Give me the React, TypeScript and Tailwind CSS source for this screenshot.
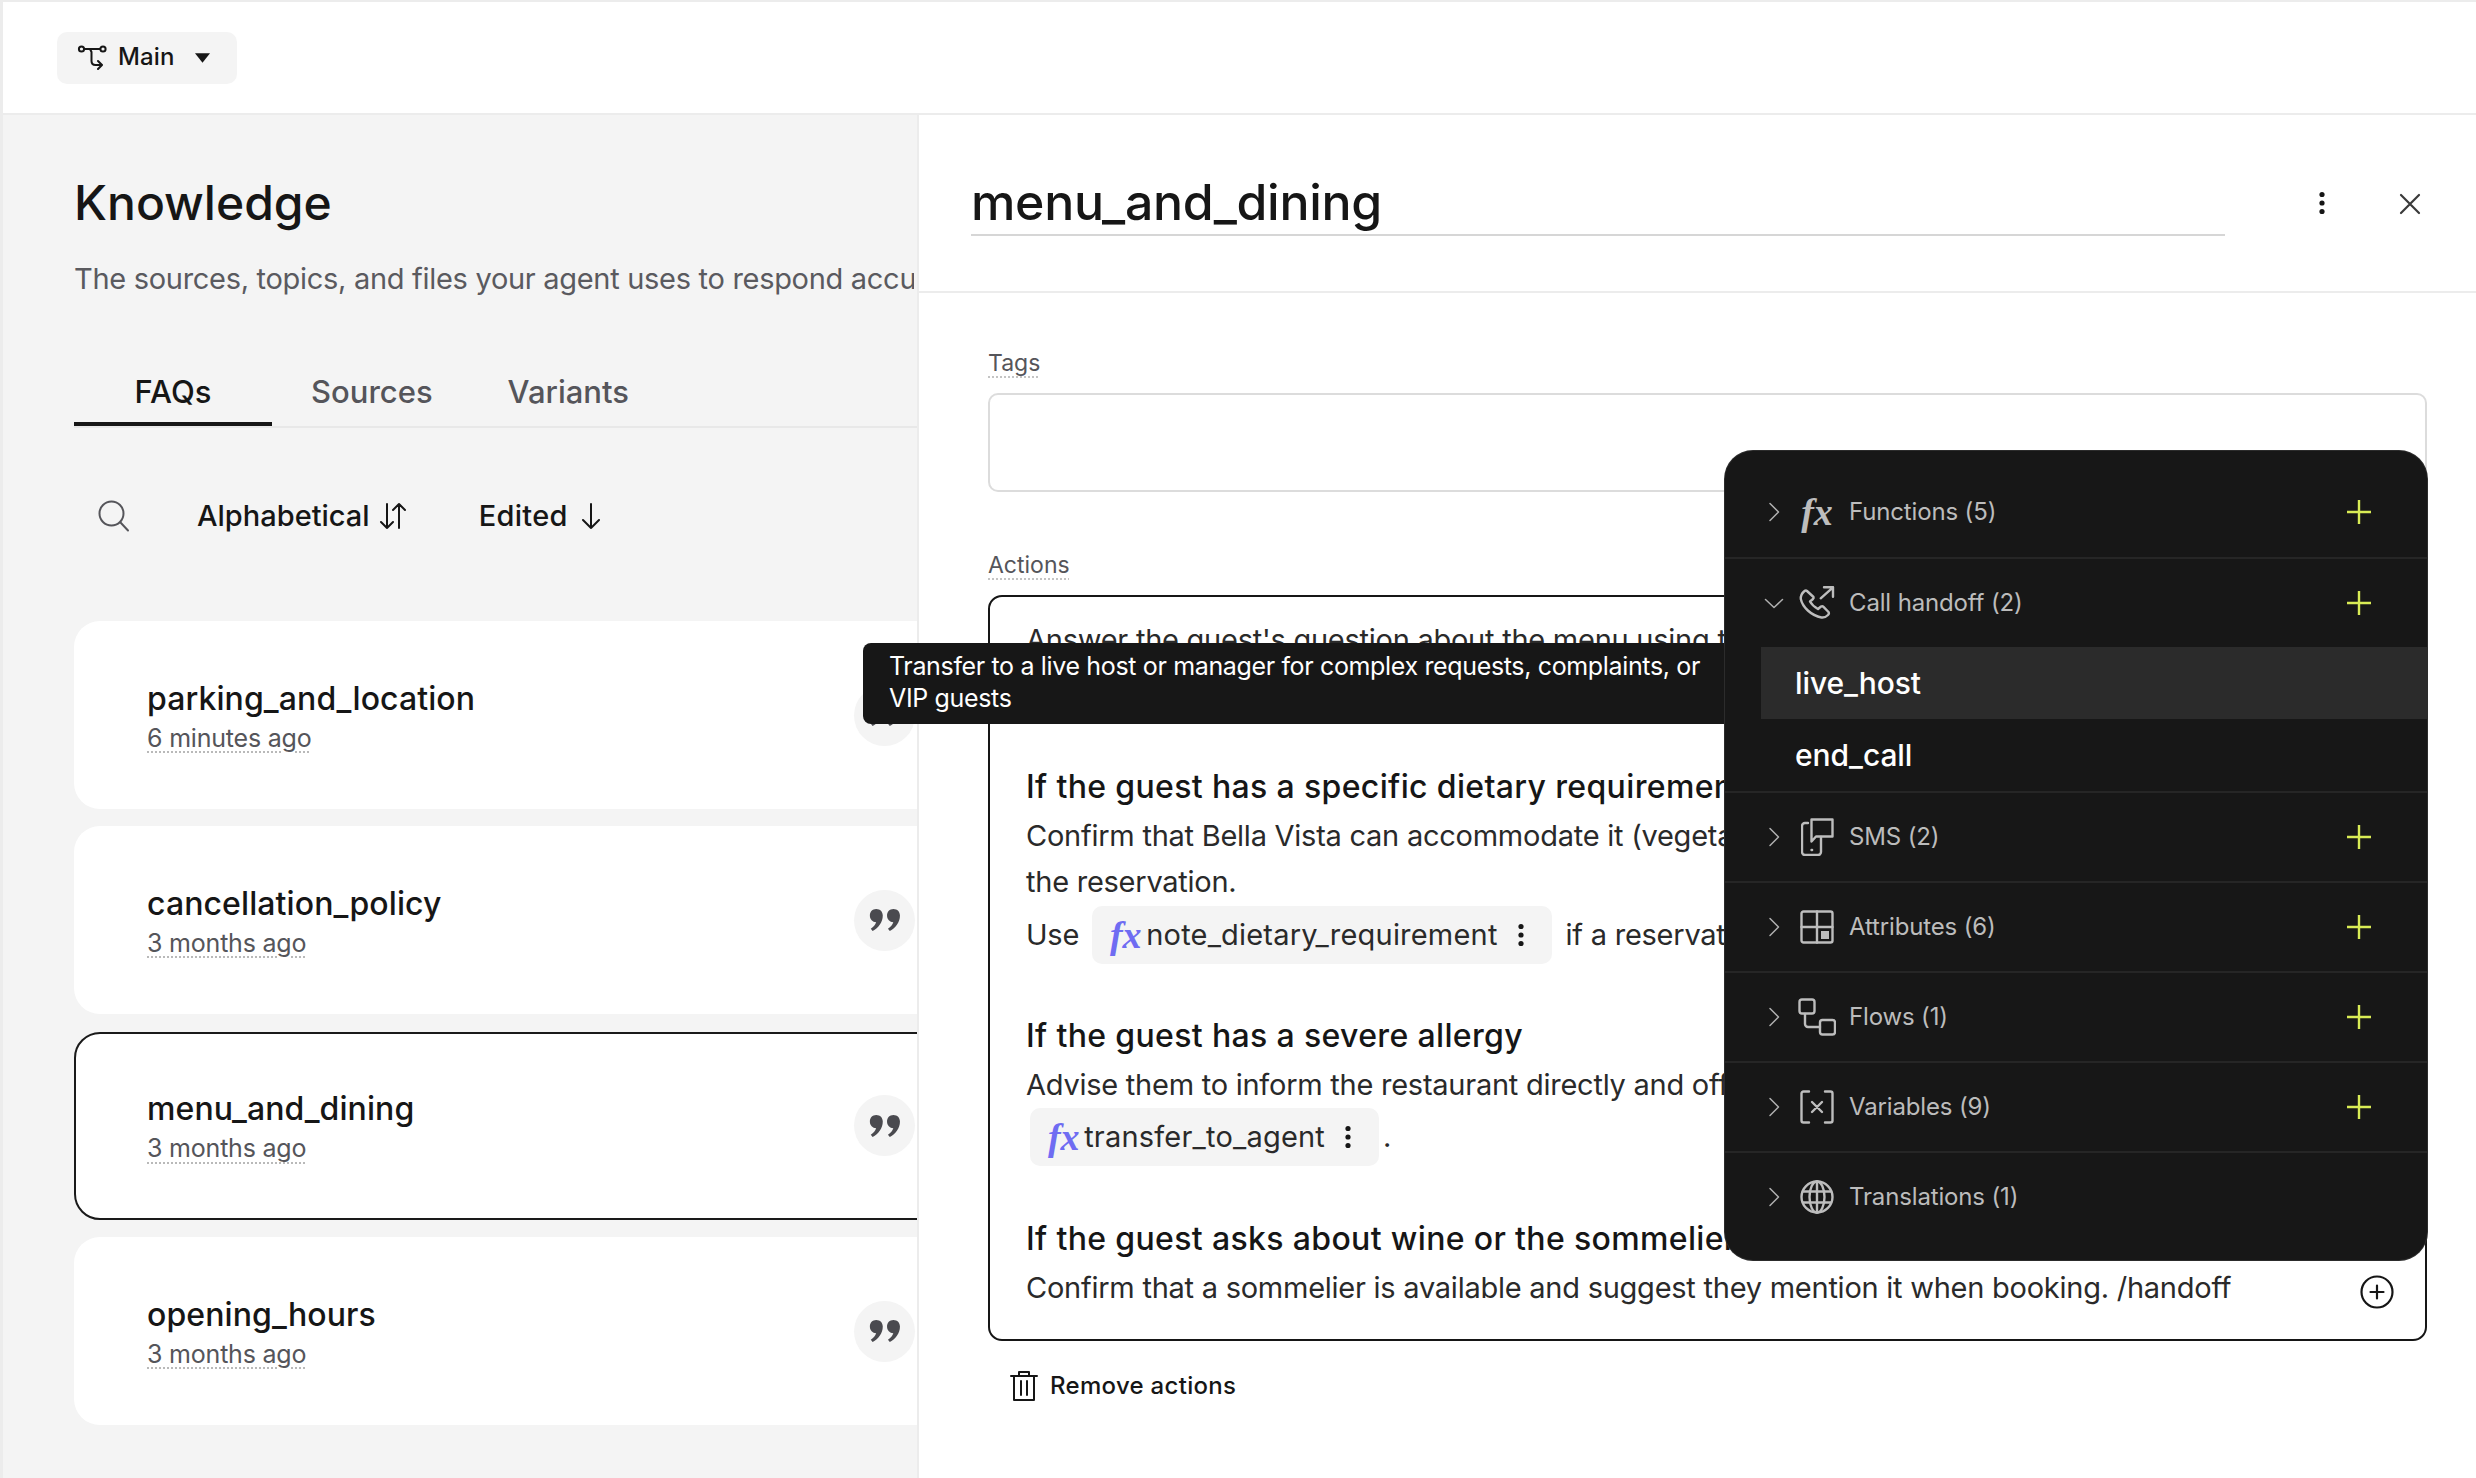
import React from "react";

const Kebab = ({ className = "" }: { className?: string }) => (
  <svg className={className} width="6" height="24" viewBox="0 0 6 24" fill="currentColor">
    <circle cx="3" cy="3.5" r="2.6" />
    <circle cx="3" cy="12" r="2.6" />
    <circle cx="3" cy="20.5" r="2.6" />
  </svg>
);

const Quote = () => (
  <svg width="32" height="24" viewBox="0 0 34 26" fill="#4a4a4f">
    <path d="M7.5 1C11.8 1 14.6 4 14.6 8.2 14.6 15.2 10 21.5 3.6 25L1.6 22.6C4.6 20.4 6.6 18 7.4 15.4 3.6 15.4 0.6 12.4 0.6 8.2 0.6 4 3.4 1 7.5 1Z" />
    <path d="M26.1 1C30.4 1 33.2 4 33.2 8.2 33.2 15.2 28.6 21.5 22.2 25L20.2 22.6C23.2 20.4 25.2 18 26 15.4 22.2 15.4 19.2 12.4 19.2 8.2 19.2 4 22 1 26.1 1Z" />
  </svg>
);

const Card = ({ title, time, selected }: { title: string; time: string; selected?: boolean }) => (
  <div
    className={
      selected
        ? "flex h-[188px] w-[900px] shrink-0 items-center justify-between rounded-[26px] border-2 border-[#1a1a1a] bg-white pl-[71px] pr-[57px]"
        : "flex h-[188px] w-[900px] shrink-0 items-center justify-between rounded-[26px] bg-white pl-[73px] pr-[59px]"
    }
  >
    <div className="flex flex-col pt-[2px]">
      <div className="text-[32px] font-medium leading-[40px] tracking-[0.1px] text-[#161616]">{title}</div>
      <div className="mt-[3px] self-start text-[25px] leading-[32px] tracking-[-0.2px] text-[#55555a] underline decoration-[#b9b9b9] decoration-dotted decoration-2 underline-offset-[5px]">
        {time}
      </div>
    </div>
    <div className="flex h-[61px] w-[61px] items-center justify-center rounded-full bg-[#f4f4f4]">
      <Quote />
    </div>
  </div>
);

const Chevron = ({ open }: { open?: boolean }) => (
  <svg width="22" height="22" viewBox="0 0 22 22" fill="none" stroke="#b0b0b0" strokeWidth="1.5" strokeLinecap="round" strokeLinejoin="round">
    {open ? <path d="M2.5 7.5l8.5 8 8.5-8" /> : <path d="M7 2.5l8.5 8.5L7 19.5" />}
  </svg>
);

const Plus = () => (
  <svg width="26" height="26" viewBox="0 0 26 26" fill="none" stroke="#d9ec55" strokeWidth="2.4">
    <path d="M13 1v24M1 13h24" />
  </svg>
);

const ic = { fill: "none", stroke: "#bdbdbd", strokeWidth: 2.4, strokeLinecap: "round", strokeLinejoin: "round" } as const;

const FxIcon = () => (
  <span className="font-['Liberation_Serif',serif] text-[38px] italic font-bold leading-none text-[#bdbdbd]">fx</span>
);
const CallIcon = () => (
  <svg width="36" height="36" viewBox="0 0 36 36" {...ic}>
    <path d="M8 6L14.5 12Q15 13 14 14L11 16.5Q13.5 21 19 24L22 21.5Q23.5 20.8 24.5 21.8L29.5 27Q30.5 28.5 29 30Q26 33 22.5 32.5C12 30.5 3.5 22 1.8 14Q1.5 9.5 5 6.5Q6.8 5 8 6Z" />
    <path d="M21.7 13.3L34 2.3M25 2.3h9v9.4" />
  </svg>
);
const SmsIcon = () => (
  <svg width="33" height="38" viewBox="0 0 33 38" {...ic}>
    <path d="M7 5H4a3 3 0 0 0-3 3v26a3 3 0 0 0 3 3h13a3 3 0 0 0 3-3V19" />
    <path d="M10.5 1.5h21v17H15l-4.5 5V1.5z" />
    <path d="M10.5 32h.6" />
  </svg>
);
const AttrIcon = () => (
  <svg width="34" height="34" viewBox="0 0 34 34" {...ic}>
    <rect x="1.5" y="1.5" width="31" height="31" rx="2" />
    <path d="M17 1.5v31M1.5 17h31" />
    <rect x="21" y="21" width="8" height="8" fill="#bdbdbd" stroke="none" />
  </svg>
);
const FlowIcon = () => (
  <svg width="38" height="38" viewBox="0 0 38 38" {...ic}>
    <rect x="1.5" y="1.5" width="15" height="14" rx="2.5" />
    <rect x="22" y="22" width="15" height="14.5" rx="2.5" />
    <path d="M7 16v10a3 3 0 0 0 3 3h12" />
  </svg>
);
const VarIcon = () => (
  <svg width="34" height="34" viewBox="0 0 34 34" {...ic}>
    <path d="M9 1.5H3.5a2 2 0 0 0-2 2v27a2 2 0 0 0 2 2H9M25 1.5h5.5a2 2 0 0 1 2 2v27a2 2 0 0 1-2 2H25M12 12l10 10M22 12L12 22" />
  </svg>
);
const GlobeIcon = () => (
  <svg width="34" height="34" viewBox="0 0 34 34" {...ic}>
    <circle cx="17" cy="17" r="15.5" />
    <ellipse cx="17" cy="17" rx="7.5" ry="15.5" />
    <path d="M17 1.5v31M3 11.5h28M3 22.5h28" />
  </svg>
);

const Row = ({ label, icon, plus = true, open }: { label: string; icon: React.ReactNode; plus?: boolean; open?: boolean }) => (
  <div className="flex h-[88px] items-center pl-[38px] pr-[55px]">
    <div className="flex w-[22px] justify-center"><Chevron open={open} /></div>
    <div className="ml-[11px] flex w-[42px] justify-center">{icon}</div>
    <div className="ml-[11px] flex-1 text-[24px] tracking-[-0.15px] text-[#bcbcbc]">{label}</div>
    {plus && <Plus />}
  </div>
);

const Chip = ({ name, className = "" }: { name: string; className?: string }) => (
  <span className={"inline-flex h-[58px] items-center rounded-[10px] bg-[#f4f4f4] pl-[18px] pr-[28px] " + className}>
    <span className="font-['Liberation_Serif',serif] text-[38px] font-bold italic leading-none text-[#6f6cf2]">fx</span>
    <span className="ml-[5px] tracking-[0.2px] text-[#2a2a2a]">{name}</span>
    <Kebab className="ml-[20px] text-[#161616]" />
  </span>
);

export default function App() {
  return (
    <div className="relative flex h-[1478px] w-[2476px] flex-col overflow-hidden border-l-[3px] border-t-2 border-[#ececec] bg-white font-['Inter','Liberation_Sans',sans-serif] text-[#161616]">
      {/* Top bar */}
      <div className="flex h-[113px] shrink-0 items-center border-b-2 border-[#ececec] pl-[54px]">
        <button className="flex h-[52px] w-[180px] items-center rounded-[10px] bg-[#f4f4f4] pl-[20px] pb-[2px]">
          <svg width="30" height="26" viewBox="0 0 30 26" fill="none" stroke="#161616" strokeWidth="2" strokeLinecap="round" strokeLinejoin="round">
            <circle cx="4.5" cy="5" r="2.6" />
            <circle cx="26" cy="5" r="2.6" />
            <path d="M7.5 5h15.5M13 5l1.5 3v9c0 2.5 1.5 4 4 4h6M21 17l4 4-4 4" />
          </svg>
          <span className="ml-[11px] text-[24px] font-[550] tracking-[0.15px]">Main</span>
          <svg className="ml-[20px] mt-[2px]" width="15" height="10" viewBox="0 0 16 10" fill="#161616"><path d="M0 0h16L8 10z" /></svg>
        </button>
      </div>

      <div className="flex min-h-0 flex-1">
        {/* Left panel */}
        <div className="flex w-[914px] shrink-0 flex-col overflow-hidden bg-[#f4f4f4] pl-[71px]">
          <h1 className="mt-[58px] text-[48px] font-medium leading-[60px] text-[#161616]">Knowledge</h1>
          <p className="mt-[26px] w-[840px] overflow-hidden whitespace-nowrap text-[29px] leading-[40px] tracking-[-0.3px] text-[#5a5a5f]">
            The sources, topics, and files your agent uses to respond accurately to callers
          </p>
          <div className="mt-[69px] flex h-[60px] shrink-0 border-b-2 border-[#e8e8e8]">
            <div className="flex h-[58px] w-[198px] justify-center border-b-4 border-[#161616] text-[31px] font-medium leading-[48px]">FAQs</div>
            <div className="ml-[39px] h-[58px] text-[31px] font-medium leading-[48px] text-[#55555a]">Sources</div>
            <div className="ml-[75px] h-[58px] text-[31px] font-medium leading-[48px] text-[#55555a]">Variants</div>
          </div>
          <div className="mt-[60px] flex h-[56px] shrink-0 items-center">
            <svg className="ml-[24px]" width="32" height="32" viewBox="0 0 32 32" fill="none" stroke="#55555a" strokeWidth="2" strokeLinecap="round">
              <circle cx="13.5" cy="13.5" r="12" />
              <path d="M22.5 22.5L30 30.5" />
            </svg>
            <span className="ml-[67px] text-[29px] font-[550]">Alphabetical</span>
            <svg className="ml-[8px]" width="30" height="30" viewBox="0 0 30 30" fill="none" stroke="#161616" strokeWidth="2" strokeLinecap="round" strokeLinejoin="round">
              <path d="M9 3v24M3 21l6 6 6-6M21 27V3M15 9l6-6 6 6" />
            </svg>
            <span className="ml-[71px] text-[29px] font-[550] tracking-[0.3px]">Edited</span>
            <svg className="ml-[12px]" width="22" height="30" viewBox="0 0 22 30" fill="none" stroke="#161616" strokeWidth="2" strokeLinecap="round" strokeLinejoin="round">
              <path d="M11 3v24M3 19l8 8 8-8" />
            </svg>
          </div>
          <div className="mt-[77px] flex flex-col gap-[17.4px]">
            <Card title="parking_and_location" time="6 minutes ago" />
            <Card title="cancellation_policy" time="3 months ago" />
            <Card title="menu_and_dining" time="3 months ago" selected />
            <Card title="opening_hours" time="3 months ago" />
          </div>
        </div>

        {/* Right panel */}
        <div className="flex min-w-0 flex-1 flex-col border-l-2 border-[#ececec]">
          <div className="flex h-[178px] shrink-0 border-b-2 border-[#ececec] pl-[52px]">
            <div className="mt-[55px] h-[66px] w-[1254px] border-b-2 border-[#d6d6d6] text-[50px] font-medium leading-[64px] tracking-[-0.3px]">menu_and_dining</div>
            <Kebab className="ml-[94px] mt-[76px] text-[#161616]" />
            <svg className="ml-[74px] mt-[78px]" width="22" height="22" viewBox="0 0 22 22" fill="none" stroke="#3a3a3a" strokeWidth="2.2" strokeLinecap="round">
              <path d="M2 2l18 18M20 2L2 20" />
            </svg>
          </div>

          <div className="flex flex-col pl-[69px] pr-[49px]">
            <div className="mt-[55px] self-start text-[23px] leading-[30px] text-[#55555a] underline decoration-[#c4c4c4] decoration-dotted decoration-2 underline-offset-[5px]">Tags</div>
            <div className="mt-[15px] h-[99px] rounded-[10px] border-2 border-[#dcdcdc]" />
            <div className="mt-[58px] self-start text-[23px] leading-[30px] text-[#55555a] underline decoration-[#c4c4c4] decoration-dotted decoration-2 underline-offset-[5px]">Actions</div>
            <div className="mt-[15px] h-[746px] overflow-hidden rounded-[14px] border-2 border-[#161616] pl-[36px] pt-[20px] text-[29px] leading-[46px] tracking-[-0.25px] text-[#2a2a2a]">
              <p className="whitespace-nowrap">Answer the guest's question about the menu using the knowledge base below.</p>
              <p className="whitespace-nowrap">Keep it short and mention seasonal dishes where they are relevant.</p>
              <h3 className="mt-[55px] whitespace-nowrap text-[32px] font-[550] tracking-[0.35px] text-[#161616]">If the guest has a specific dietary requirement</h3>
              <p className="mt-[3px] whitespace-nowrap">Confirm that Bella Vista can accommodate it (vegetarian, vegan, gluten-free) and note it on</p>
              <p>the reservation.</p>
              <div className="flex h-[59px] items-center whitespace-nowrap">
                <span>Use</span>
                <Chip name="note_dietary_requirement" className="ml-[13px]" />
                <span className="ml-[14px]">if a reservation exists.</span>
              </div>
              <h3 className="mt-[49px] text-[32px] font-[550] tracking-[0.35px] text-[#161616]">If the guest has a severe allergy</h3>
              <p className="mt-[3px] whitespace-nowrap">Advise them to inform the restaurant directly and offer to connect them:</p>
              <div className="ml-[4px] flex h-[58px] items-center">
                <Chip name="transfer_to_agent" />
                <span className="ml-[4px]">.</span>
              </div>
              <h3 className="mt-[50px] whitespace-nowrap text-[32px] font-[550] tracking-[0.35px] text-[#161616]">If the guest asks about wine or the sommelier</h3>
              <div className="mt-[3px] flex justify-between pr-[31px]">
                <p className="whitespace-nowrap">Confirm that a sommelier is available and suggest they mention it when booking. /handoff</p>
                <svg className="mt-[10px]" width="34" height="34" viewBox="0 0 34 34" fill="none" stroke="#161616" strokeWidth="2.2" strokeLinecap="round">
                  <circle cx="17" cy="17" r="15.5" />
                  <path d="M17 10.5v13M10.5 17h13" />
                </svg>
              </div>
            </div>
            <div className="ml-[22px] mt-[27px] flex items-center">
              <svg width="28" height="32" viewBox="0 0 28 32" fill="none" stroke="#161616" strokeWidth="2" strokeLinecap="round" strokeLinejoin="round">
                <path d="M1 6h26M9 6V2h10v4M4 6v24h20V6M11 11v14M17 11v14" />
              </svg>
              <span className="ml-[12px] text-[24px] font-[550] tracking-[0.3px]">Remove actions</span>
            </div>
          </div>
        </div>
      </div>

      {/* Tooltip */}
      <div className="absolute left-[860px] top-[641px] h-[81px] w-[880px] rounded-l-[8px] bg-[#171717] pl-[26px] pt-[7px] text-[25px] leading-[32px] tracking-[-0.35px] text-white">
        Transfer to a live host or manager for complex requests, complaints, or<br />VIP guests
      </div>

      {/* Dark popup */}
      <div className="absolute left-[1722px] top-[449px] flex h-[809px] w-[702px] flex-col overflow-hidden rounded-[28px] bg-[#171717] shadow-[0_0_0_1px_#2c2c2c]">
        <div className="border-b-2 border-[#262626] pb-[1px] pt-[17px]"><Row label="Functions (5)" icon={<FxIcon />} /></div>
        <Row label="Call handoff (2)" icon={<CallIcon />} open />
        <div className="ml-[36px] flex h-[72px] items-center bg-[#2b2b2b] pl-[34px] text-[30px] font-medium tracking-[-0.1px] text-white">live_host</div>
        <div className="flex h-[72px] items-center pl-[70px] text-[30px] font-medium tracking-[-0.1px] text-white">end_call</div>
        <div className="border-t-2 border-[#262626]"><Row label="SMS (2)" icon={<SmsIcon />} /></div>
        <div className="border-t-2 border-[#262626]"><Row label="Attributes (6)" icon={<AttrIcon />} /></div>
        <div className="border-t-2 border-[#262626]"><Row label="Flows (1)" icon={<FlowIcon />} /></div>
        <div className="border-t-2 border-[#262626]"><Row label="Variables (9)" icon={<VarIcon />} /></div>
        <div className="border-t-2 border-[#262626]"><Row label="Translations (1)" icon={<GlobeIcon />} plus={false} /></div>
      </div>
    </div>
  );
}
